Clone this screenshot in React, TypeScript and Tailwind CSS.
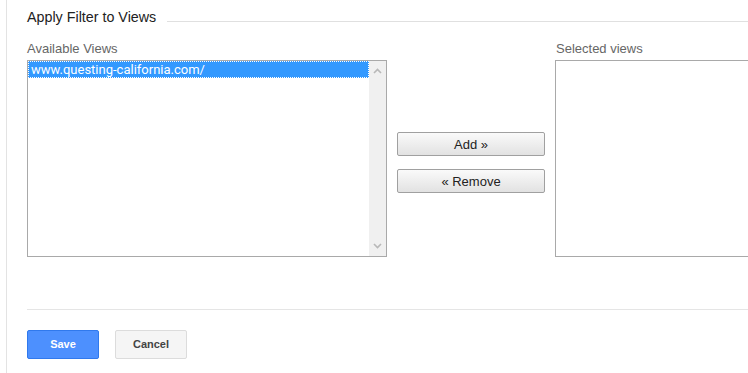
import React from "react";

function Chevron({ dir }: { dir: "up" | "down" }) {
  return (
    <svg width="9" height="6" viewBox="0 0 9 6" className="block">
      <path
        d={dir === "up" ? "M1 5 L4.5 1.5 L8 5" : "M1 1 L4.5 4.5 L8 1"}
        fill="none"
        stroke="#b8b8b8"
        strokeWidth="1.6"
      />
    </svg>
  );
}

function GrayButton({ label }: { label: string }) {
  return (
    <button className="h-[24px] w-[148px] rounded-[2px] border border-[#a0a0a0] bg-gradient-to-b from-[#fafafa] to-[#e2e2e2] text-[13px] leading-none text-[#222]">
      {label}
    </button>
  );
}

export default function App() {
  return (
    <div
      className="h-[373px] w-[748px] overflow-hidden bg-white"
      style={{ fontFamily: "'Liberation Sans', Arial, sans-serif" }}
    >
      <div className="ml-[6px] h-full border-l border-[#e3e3e3] pl-5">
        {/* header */}
        <div className="flex items-start pt-[9px]">
          <h2 className="text-[14.3px] leading-4 text-[#222]">Apply Filter to Views</h2>
          <div className="ml-[11px] mt-[12px] h-px flex-1 bg-[#e0e0e0]" />
        </div>

        {/* lists */}
        <div className="mt-[16px] flex items-start gap-[10px]">
          <div className="w-[360px] shrink-0">
            <div className="mb-[4px] text-[13px] leading-[15px] text-[#666]">Available Views</div>
            <div className="flex h-[197px] border border-[#a9a9a9]">
              <div className="flex-1">
                <div
                  className="h-[17px] border border-dotted border-white bg-[#3399ff] pl-[2px] text-[13px] leading-[16px] text-white"
                  style={{ fontFamily: "Roboto, 'Liberation Sans', sans-serif" }}
                >
                  www.questing-california.com/
                </div>
              </div>
              <div className="flex w-[17px] flex-col items-center justify-between bg-[#f0f0f0] pb-[7px] pt-[7px]">
                <Chevron dir="up" />
                <Chevron dir="down" />
              </div>
            </div>
          </div>

          <div className="mt-[91px] flex w-[148px] shrink-0 flex-col gap-[13px]">
            <GrayButton label="Add »" />
            <GrayButton label="« Remove" />
          </div>

          <div className="w-[360px] shrink-0">
            <div className="mb-[4px] pl-px text-[13px] leading-[15px] text-[#666]">Selected views</div>
            <div className="h-[197px] border border-[#a9a9a9]" />
          </div>
        </div>

        {/* footer */}
        <div className="mt-[52px] h-px bg-[#e5e5e5]" />
        <div className="mt-[20px] flex gap-4">
          <button className="h-[29px] w-[72px] rounded-[2px] border border-[#3079ed] bg-[#4d90fe] text-[11px] font-bold text-white">
            Save
          </button>
          <button className="h-[29px] w-[72px] rounded-[2px] border border-[#dcdcdc] bg-[#f5f5f5] text-[11px] font-bold text-[#444]">
            Cancel
          </button>
        </div>
      </div>
    </div>
  );
}
